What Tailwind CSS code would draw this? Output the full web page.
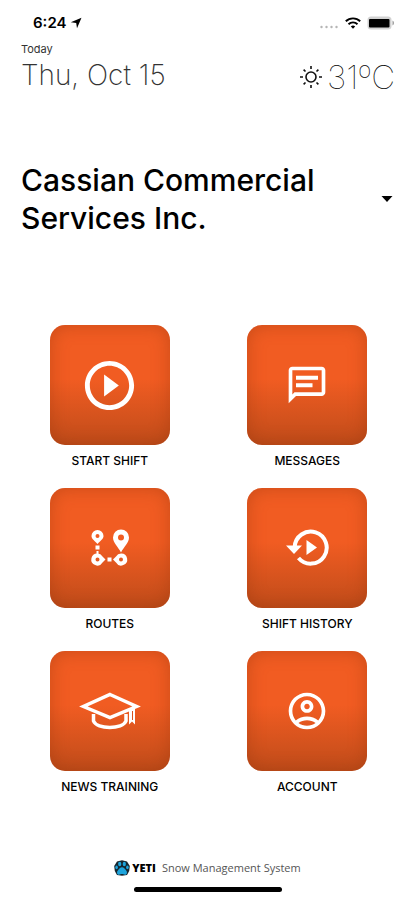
<!DOCTYPE html>
<html lang="en">
<head>
<meta charset="utf-8">
<meta name="viewport" content="width=device-width, initial-scale=1">
<title>YETI Snow Management System</title>
<script src="https://cdn.jsdelivr.net/npm/@tailwindcss/browser@4"></script>
</head>
<body class="bg-white text-black font-[Inter,'Liberation_Sans',sans-serif]">
<div class="min-h-screen flex flex-col">
  <div class="flex items-center justify-between h-10 pt-1.5 pl-[33px] pr-5">
    <div class="flex items-center gap-1">
      <span class="text-[15px] leading-5 font-semibold">6:24</span>
      <svg class="w-3 h-3" viewBox="0 0 12 12" aria-hidden="true"><path d="M11.500.7 7 11.300 6.200 6 .8 5.300z"/></svg>
    </div>
    <div class="flex items-center gap-1.5">
      <svg class="w-5 h-3" viewBox="0 0 20 12" fill="#b5b5b5" aria-hidden="true"><circle cx="2.500" cy="10" r="1.200"/><circle cx="7.500" cy="10" r="1.200"/><circle cx="12.500" cy="10" r="1.200"/><circle cx="17.500" cy="10" r="1.200"/></svg>
      <svg class="w-4 h-3" viewBox="0 0 16 12" fill="none" stroke="#000" stroke-width="1.900" aria-hidden="true"><path d="M.8 4.300a10.300 10.300 0 0 1 14.400 0M3.500 7.200a6.500 6.500 0 0 1 9 0"/><path d="M8 11.800 5.800 9.500a3.200 3.200 0 0 1 4.400 0z" fill="#000" stroke="none"/></svg>
      <svg class="w-7 h-3.5" viewBox="0 0 28 14" aria-hidden="true"><rect x=".5" y=".5" width="24" height="13" rx="3.500" fill="#d2d2d2"/><rect x="2" y="3" width="20.500" height="8.500" rx="1" fill="#000"/><path d="M25.500 4.500c2 1 2 4 0 5z" fill="#999"/></svg>
    </div>
  </div>

  <header class="flex items-end justify-between pt-px pl-[21px] pr-5">
    <div>
      <p class="text-[11px] leading-4 text-[#333]">Today</p>
      <p class="text-[28px] leading-9 font-extralight text-[#333]">Thu, Oct 15</p>
    </div>
    <div class="flex items-center gap-1">
      <svg class="w-6 h-6" viewBox="0 0 24 24" fill="none" stroke="#111" stroke-width="1.600" aria-hidden="true"><circle cx="12" cy="12" r="5"/><path d="M12 1v3M12 20v3M1 12h3M20 12h3M4.600 4.600l1.900 1.900M17.500 17.500l1.900 1.900M4.600 19.400l1.900-1.900M17.500 6.500l1.900-1.900"/></svg>
      <p class="text-[33px] leading-8 font-thin text-black">31ºC</p>
    </div>
  </header>

  <div class="relative flex items-center justify-between mt-[68px] pl-[21px] pr-5">
    <label for="company" class="w-[310px] text-[30px] leading-[38px] font-medium">Cassian Commercial Services Inc.</label>
    <svg class="w-4 h-2 shrink-0" viewBox="0 0 16 8" aria-hidden="true"><path d="M2.500 1h11L8 7z"/></svg>
    <select id="company" class="absolute inset-0 w-full h-full opacity-0"><option>Cassian Commercial Services Inc.</option></select>
  </div>

  <main class="grid grid-cols-2 gap-y-[18px] mt-[88px] pl-[11px] pr-[9px]">
    <button class="flex flex-col items-center gap-[7px]">
      <span class="flex items-center justify-center size-[120px] rounded-[15px] bg-linear-to-b from-[#f15c22] from-45% to-[#c04c1a] shadow-[inset_0_0_18px_rgba(140,50,10,0.4)]">
        <svg class="size-[59px]" viewBox="0 0 24 24" fill="#fff" aria-hidden="true"><path d="M12 2C6.480 2 2 6.480 2 12s4.480 10 10 10 10-4.480 10-10S17.520 2 12 2zm0 18c-4.410 0-8-3.590-8-8s3.590-8 8-8 8 3.590 8 8-3.590 8-8 8zM9.800 16.500l6-4.500-6-4.500z"/></svg>
      </span>
      <span class="text-xs leading-[18px] font-medium">START SHIFT</span>
    </button>
    <button class="flex flex-col items-center gap-[7px]">
      <span class="flex items-center justify-center size-[120px] rounded-[15px] bg-linear-to-b from-[#f15c22] from-45% to-[#c04c1a] shadow-[inset_0_0_18px_rgba(140,50,10,0.4)]">
        <svg class="size-11" viewBox="0 0 24 24" fill="#fff" aria-hidden="true"><path d="M4 4h16v12H5.170L4 17.170V4m0-2c-1.100 0-1.990.9-1.990 2L2 22l4-4h14c1.100 0 2-.9 2-2V4c0-1.100-.9-2-2-2H4zm2 9h9v2.200H6V11zm0-4h12v2.200H6V7z"/></svg>
      </span>
      <span class="text-xs leading-[18px] font-medium">MESSAGES</span>
    </button>
    <button class="flex flex-col items-center gap-[7px]">
      <span class="flex items-center justify-center size-[120px] rounded-[15px] bg-linear-to-b from-[#f15c22] from-45% to-[#c04c1a] shadow-[inset_0_0_18px_rgba(140,50,10,0.4)]">
        <svg class="size-10" viewBox="0 0 40 40" fill="#fff" fill-rule="evenodd" aria-hidden="true"><path d="M7.500 2a6 6 0 0 1 6 6c0 3-3 4.500-6 8-3-3.500-6-5-6-8a6 6 0 0 1 6-6zm0 4a2 2 0 1 0 0 4 2 2 0 0 0 0-4z"/><path d="M31 1.500a8 8 0 0 1 8 8C39 15 34 18.500 31 24.500 28 18.500 23 15 23 9.500a8 8 0 0 1 8-8zm0 5a3 3 0 1 0 0 6 3 3 0 0 0 0-6z"/><path d="M7.500 25.500a6 6 0 0 1 5 3l3 3-3 3a6 6 0 1 1-5-9zm0 4a2 2 0 1 0 0 4 2 2 0 0 0 0-4z"/><path d="M31 25.500a6 6 0 1 1-5 9l-3-3 3-3a6 6 0 0 1 5-3zm0 4a2 2 0 1 0 0 4 2 2 0 0 0 0-4z"/><path d="M5.500 17.500h4v4h-4zM6.500 23h2v3h-2zM17.500 29.500h4v4h-4z"/></svg>
      </span>
      <span class="text-xs leading-[18px] font-medium">ROUTES</span>
    </button>
    <button class="flex flex-col items-center gap-[7px]">
      <span class="flex items-center justify-center size-[120px] rounded-[15px] bg-linear-to-b from-[#f15c22] from-45% to-[#c04c1a] shadow-[inset_0_0_18px_rgba(140,50,10,0.4)]">
        <svg class="size-11" viewBox="0 0 44 44" aria-hidden="true"><path d="M9.700 21A16 16 0 1 1 13.500 32" fill="none" stroke="#fff" stroke-width="4"/><path d="M1 19.500h16l-8 8.500zM21.500 14v15L32 21.500z" fill="#fff"/></svg>
      </span>
      <span class="text-xs leading-[18px] font-medium">SHIFT HISTORY</span>
    </button>
    <button class="flex flex-col items-center gap-[7px]">
      <span class="flex items-center justify-center size-[120px] rounded-[15px] bg-linear-to-b from-[#f15c22] from-45% to-[#c04c1a] shadow-[inset_0_0_18px_rgba(140,50,10,0.4)]">
        <svg class="w-16 h-10" viewBox="0 0 64 40" fill="none" stroke="#fff" stroke-width="3.500" aria-hidden="true"><path d="M32 3.500 58.500 15.500 32 26.500 5.500 15.500z"/><path d="M15.500 23v7c3 8.500 29.500 8.500 32.500 0v-7"/><path d="M51 18l6-2.500V33.500l-3-3-3 3z" fill="#fff" stroke="none"/><path d="M54.500 20v9" stroke="#d9531e" stroke-width="1"/></svg>
      </span>
      <span class="text-xs leading-[18px] font-medium">NEWS TRAINING</span>
    </button>
    <button class="flex flex-col items-center gap-[7px]">
      <span class="flex items-center justify-center size-[120px] rounded-[15px] bg-linear-to-b from-[#f15c22] from-45% to-[#c04c1a] shadow-[inset_0_0_18px_rgba(140,50,10,0.4)]">
        <svg class="size-11" viewBox="0 0 24 24" fill="#fff" aria-hidden="true"><path d="M12 2C6.480 2 2 6.480 2 12s4.480 10 10 10 10-4.480 10-10S17.520 2 12 2zM7.350 18.500C8.660 17.560 10.260 17 12 17s3.340.56 4.650 1.500C15.340 19.440 13.740 20 12 20s-3.340-.56-4.650-1.500zm10.790-1.380C16.450 15.800 14.320 15 12 15s-4.450.8-6.140 2.120C4.700 15.730 4 13.950 4 12c0-4.420 3.580-8 8-8s8 3.580 8 8c0 1.950-.7 3.730-1.860 5.120z"/><path d="M12 6c-1.930 0-3.500 1.570-3.500 3.500S10.070 13 12 13s3.500-1.570 3.500-3.500S13.930 6 12 6zm0 5c-.83 0-1.500-.67-1.500-1.500S11.170 8 12 8s1.500.67 1.500 1.500S12.830 11 12 11z"/></svg>
      </span>
      <span class="text-xs leading-[18px] font-medium">ACCOUNT</span>
    </button>
  </main>

  <footer class="mt-auto flex flex-col items-center pb-2 gap-[11px]">
    <div class="flex items-center h-4">
      <svg class="size-4" viewBox="0 0 16 16" aria-hidden="true"><path d="M3 1.500 8 .3l5 1.200L15.800 6l-.6 5-2.200 4-5 .8-5-.8L.8 11 .2 6z" fill="#16262f"/><g fill="#1ea4dc"><ellipse cx="5.700" cy="4" rx="1.600" ry="2.300"/><ellipse cx="10.300" cy="4" rx="1.600" ry="2.300"/><ellipse cx="2.600" cy="7.300" rx="1.300" ry="1.900"/><ellipse cx="13.400" cy="7.300" rx="1.300" ry="1.900"/><path d="M8 7.300c2 0 2.600 1.500 4 2.900 1.500 1.500 1.300 4.600-1 4.600-1.200 0-1.800-.7-3-.7s-1.800.7-3 .7c-2.300 0-2.500-3.100-1-4.600 1.400-1.400 2-2.900 4-2.900z"/></g></svg>
      <span class="ml-0.5 text-[11px] leading-4 font-extrabold font-['Open_Sans',sans-serif]">YETI</span>
      <span class="ml-1.5 text-[11px] leading-4 text-[#555] font-['Open_Sans',sans-serif]">Snow Management System</span>
    </div>
    <div class="w-[148px] h-[5px] rounded-full bg-black"></div>
  </footer>
</div>
</body>
</html>
